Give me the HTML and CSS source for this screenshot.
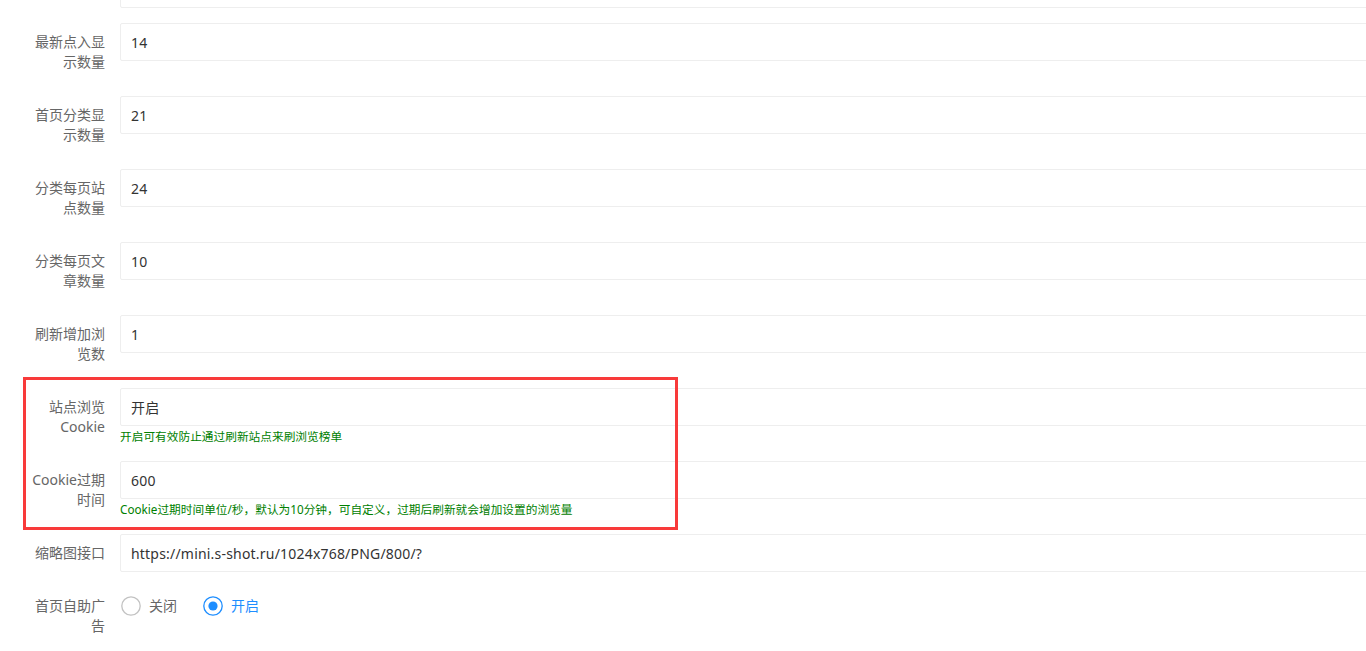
FILE: index.html
```html
<!DOCTYPE html>
<html lang="zh-CN">
<head>
<meta charset="utf-8">
<title>设置</title>
<link rel="stylesheet" href="styles.css">
</head>
<body>
<div class="form">
  <div class="item">
    <label class="label"></label>
    <div class="block"><input class="input" type="text" value="20"></div>
  </div>
  <div class="item">
    <label class="label">最新点入显示数量</label>
    <div class="block"><input class="input" type="text" value="14"></div>
  </div>
  <div class="item">
    <label class="label">首页分类显示数量</label>
    <div class="block"><input class="input" type="text" value="21"></div>
  </div>
  <div class="item">
    <label class="label">分类每页站点数量</label>
    <div class="block"><input class="input" type="text" value="24"></div>
  </div>
  <div class="item">
    <label class="label">分类每页文章数量</label>
    <div class="block"><input class="input" type="text" value="10"></div>
  </div>
  <div class="item">
    <label class="label">刷新增加浏览数</label>
    <div class="block"><input class="input" type="text" value="1"></div>
  </div>
  <div class="item">
    <label class="label">站点浏览Cookie</label>
    <div class="block">
      <input class="input" type="text" value="开启">
      <div class="help">开启可有效防止通过刷新站点来刷浏览榜单</div>
    </div>
  </div>
  <div class="item">
    <label class="label">Cookie过期时间</label>
    <div class="block">
      <input class="input" type="text" value="600">
      <div class="help">Cookie过期时间单位/秒，默认为10分钟，可自定义，过期后刷新就会增加设置的浏览量</div>
    </div>
  </div>
  <div class="item">
    <label class="label">缩略图接口</label>
    <div class="block"><input class="input" type="text" value="https://mini.s-shot.ru/1024x768/PNG/800/?"></div>
  </div>
  <div class="item">
    <label class="label">首页自助广告</label>
    <div class="block radios">
      <span class="radio">
        <svg class="radio-icon" width="20" height="20" viewBox="0 0 20 20"><circle cx="10" cy="10" r="9.2" fill="#fff" stroke="#c2c2c2" stroke-width="1.3"/></svg>
        <span class="radio-text">关闭</span>
      </span>
      <span class="radio checked">
        <svg class="radio-icon" width="20" height="20" viewBox="0 0 20 20"><circle cx="10" cy="10" r="9.2" fill="#fff" stroke="#1e8eff" stroke-width="1.3"/><circle cx="10" cy="10" r="4.6" fill="#1e8eff"/></svg>
        <span class="radio-text">开启</span>
      </span>
    </div>
  </div>
</div>
<div class="highlight"></div>
</body>
</html>
```
FILE: styles.css
```css
html, body {
  margin: 0;
  padding: 0;
  overflow: hidden;
  background: #fff;
}
body {
  font-family: "Noto Sans", "Noto Sans CJK SC", sans-serif;
  font-size: 14px;
  color: #333;
  position: relative;
  height: 651px;
}
.form {
  width: 1420px;
  margin-top: -30px;
  padding-left: 10px;
}
.item {
  display: flex;
  align-items: flex-start;
  margin-bottom: 15px;
}
.label {
  width: 80px;
  min-height: 20px;
  flex: none;
  padding: 9px 15px;
  line-height: 20px;
  text-align: right;
  color: #666;
}
.block {
  flex: 1;
  min-width: 0;
}
.input {
  display: block;
  box-sizing: border-box;
  width: 100%;
  height: 38px;
  margin: 0;
  padding: 0 10px;
  border: 1px solid #eee;
  border-radius: 2px;
  background: #fff;
  font-family: inherit;
  font-size: 14px;
  letter-spacing: 0.2px;
  color: #333;
  outline: none;
}
.help {
  font-size: 11.7px;
  line-height: 20px;
  color: #008000;
}
.radios {
  display: flex;
  align-items: center;
  padding: 9px 0;
  line-height: 20px;
}
.radio {
  display: flex;
  align-items: center;
  margin-right: 25px;
}
.radio-icon {
  display: block;
  margin-left: 1px;
  margin-right: 8px;
}
.radio-text {
  color: #666;
}
.radio.checked .radio-text {
  color: #1e8eff;
}
.highlight {
  position: absolute;
  left: 23px;
  top: 377px;
  width: 649px;
  height: 147px;
  border: 3px solid #f83a3a;
}
```
